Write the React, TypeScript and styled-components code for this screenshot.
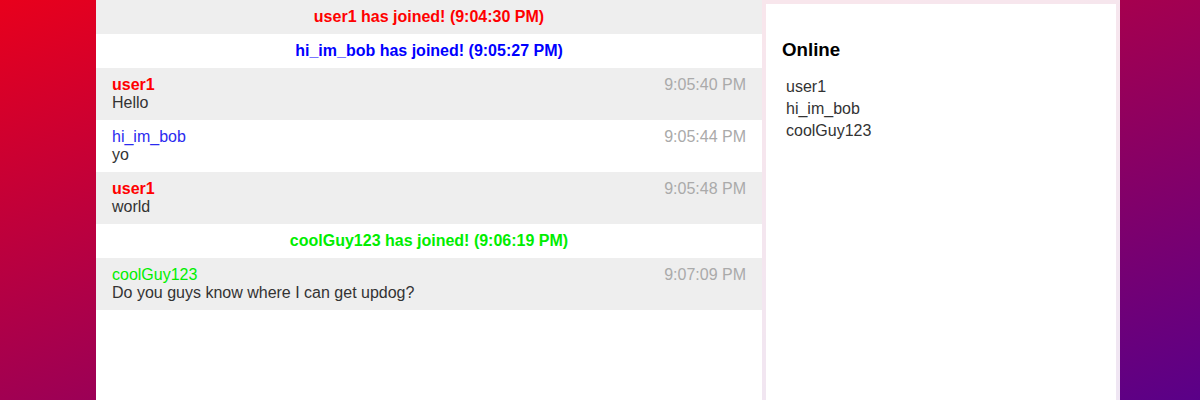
import React from "react";
import styled, { createGlobalStyle } from "styled-components";

const GlobalStyle = createGlobalStyle`
  html, body { margin: 0; padding: 0; height: 100%; }
  body {
    font-family: "Liberation Sans", Arial, sans-serif;
    background: linear-gradient(to bottom right, #e8001c, #5a0088);
    min-height: 100vh;
  }
  #root { min-height: 100vh; }
`;

const Page = styled.div`
  display: flex;
  min-height: 100vh;
  padding-left: 96px;
`;

const Chat = styled.div`
  width: 666px;
  background: #ffffff;
  display: flex;
  flex-direction: column;
`;

const JoinRow = styled.div<{ $color: string }>`
  padding: 8px 16px;
  text-align: center;
  font-size: 16px;
  line-height: 18px;
  font-weight: bold;
  color: ${(p) => p.$color};
  background: ${(p) => (p.$alt ? "#eeeeee" : "#ffffff")};
`;

const MsgRow = styled.div<{ $alt: boolean }>`
  display: flex;
  justify-content: space-between;
  align-items: flex-start;
  padding: 8px 16px;
  font-size: 16px;
  line-height: 18px;
  background: ${(p) => (p.$alt ? "#eeeeee" : "#ffffff")};
`;

const MsgBody = styled.div`
  display: flex;
  flex-direction: column;
`;

const Name = styled.span<{ $color: string; $bold: boolean }>`
  color: ${(p) => p.$color};
  font-weight: ${(p) => (p.$bold ? "bold" : "normal")};
`;

const Text = styled.span`
  color: #333333;
`;

const Time = styled.span`
  color: #aaaaaa;
`;

const SideFrame = styled.div`
  width: 358px;
  box-sizing: border-box;
  padding: 4px 4px 0 4px;
  background: rgba(255, 255, 255, 0.9);
  display: flex;
`;

const Side = styled.div`
  flex: 1;
  background: #ffffff;
  padding: 16px;
`;

const Heading = styled.h3`
  margin: 19px 0 16px 0;
  font-size: 18.72px;
  line-height: 21px;
  font-weight: bold;
  color: #000000;
`;

const UserList = styled.ul`
  list-style: none;
  margin: 0;
  padding: 0 0 0 4px;
`;

const UserItem = styled.li`
  font-size: 16px;
  line-height: 22px;
  color: #333333;
`;

type Item =
  | { kind: "join"; user: string; color: string; time: string }
  | { kind: "msg"; user: string; color: string; bold: boolean; text: string; time: string };

const items: Item[] = [
  { kind: "join", user: "user1", color: "red", time: "9:04:30 PM" },
  { kind: "join", user: "hi_im_bob", color: "blue", time: "9:05:27 PM" },
  { kind: "msg", user: "user1", color: "red", bold: true, text: "Hello", time: "9:05:40 PM" },
  { kind: "msg", user: "hi_im_bob", color: "#2b2bef", bold: false, text: "yo", time: "9:05:44 PM" },
  { kind: "msg", user: "user1", color: "red", bold: true, text: "world", time: "9:05:48 PM" },
  { kind: "join", user: "coolGuy123", color: "#00ee00", time: "9:06:19 PM" },
  {
    kind: "msg",
    user: "coolGuy123",
    color: "#00ee00",
    bold: false,
    text: "Do you guys know where I can get updog?",
    time: "9:07:09 PM",
  },
];

const online = ["user1", "hi_im_bob", "coolGuy123"];

export default function App() {
  return (
    <>
      <GlobalStyle />
      <Page>
        <Chat>
          {items.map((it, i) =>
            it.kind === "join" ? (
              <JoinRow key={i} $color={it.color} $alt={i % 2 === 0}>
                {it.user} has joined! ({it.time})
              </JoinRow>
            ) : (
              <MsgRow key={i} $alt={i % 2 === 0}>
                <MsgBody>
                  <Name $color={it.color} $bold={it.bold}>
                    {it.user}
                  </Name>
                  <Text>{it.text}</Text>
                </MsgBody>
                <Time>{it.time}</Time>
              </MsgRow>
            )
          )}
        </Chat>
        <SideFrame>
          <Side>
            <Heading>Online</Heading>
            <UserList>
              {online.map((u) => (
                <UserItem key={u}>{u}</UserItem>
              ))}
            </UserList>
          </Side>
        </SideFrame>
      </Page>
    </>
  );
}
